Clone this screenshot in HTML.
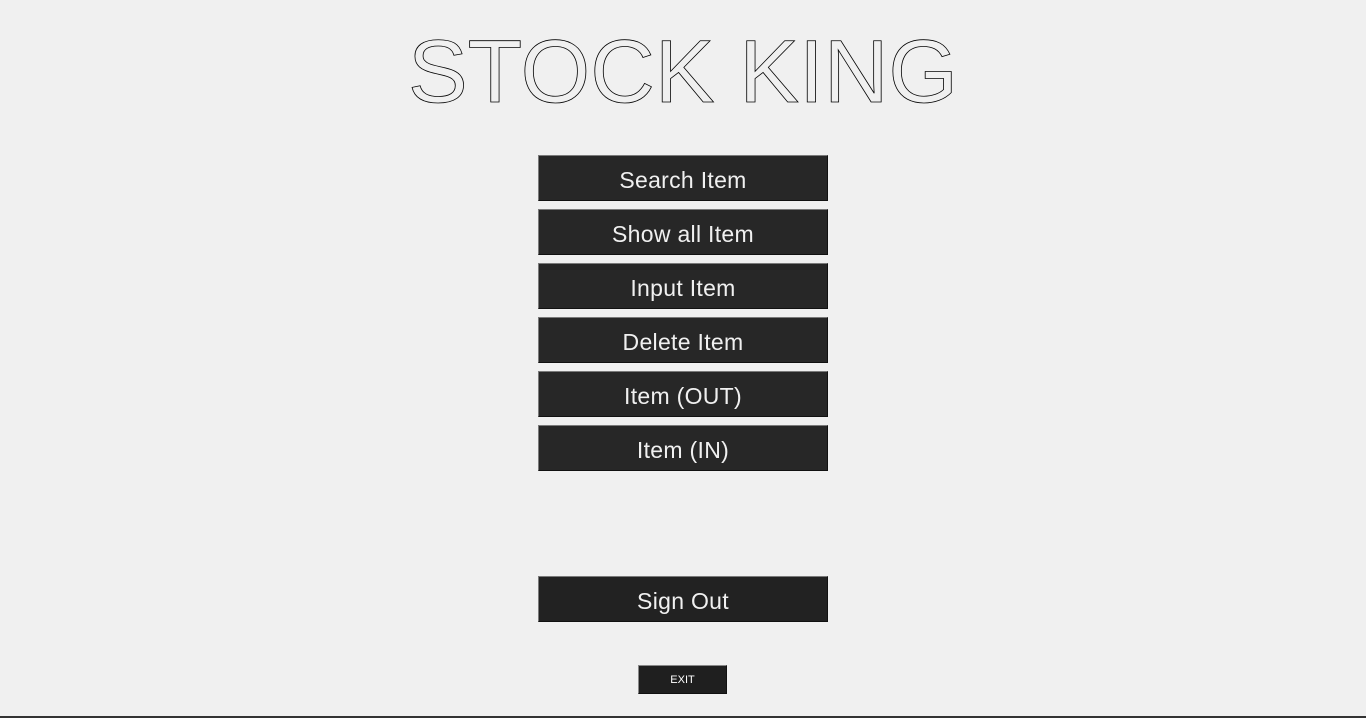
<!DOCTYPE html>
<html><head><style>
html,body{margin:0;padding:0;width:1366px;height:718px;background:#f0f0f0;overflow:hidden;position:relative;font-family:"Liberation Sans",sans-serif}
.b{position:absolute;left:538px;width:288px;height:44px;background:#272727;border:1px solid #7a7a7a;border-right-color:#111;border-bottom-color:#111;color:#f0f0f0;font-size:23px;text-align:center;line-height:48px;letter-spacing:0.3px}
.b.s{background:#222}
#exit{position:absolute;left:638px;top:665px;width:87px;height:27px;background:#1f1f1f;border:1px solid #888;border-right-color:#111;border-bottom-color:#111;color:#fff;font-size:11px;text-align:center;line-height:29px}
#line{position:absolute;left:0;top:716px;width:1366px;height:2px;background:#333}
</style></head><body>
<svg style="position:absolute;left:0;top:0" width="1366" height="130">
<text x="408" y="102" font-family="Liberation Sans" font-size="89" textLength="550" lengthAdjust="spacingAndGlyphs" fill="none" stroke="#000" stroke-width="0.8">STOCK KING</text>
</svg>
<div class="b" style="top:155px">Search Item</div>
<div class="b" style="top:209px">Show all Item</div>
<div class="b" style="top:263px">Input Item</div>
<div class="b" style="top:317px">Delete Item</div>
<div class="b" style="top:371px">Item (OUT)</div>
<div class="b" style="top:425px">Item (IN)</div>
<div class="b s" style="top:576px">Sign Out</div>
<div id="exit">EXIT</div>
<div id="line"></div>
</body></html>
